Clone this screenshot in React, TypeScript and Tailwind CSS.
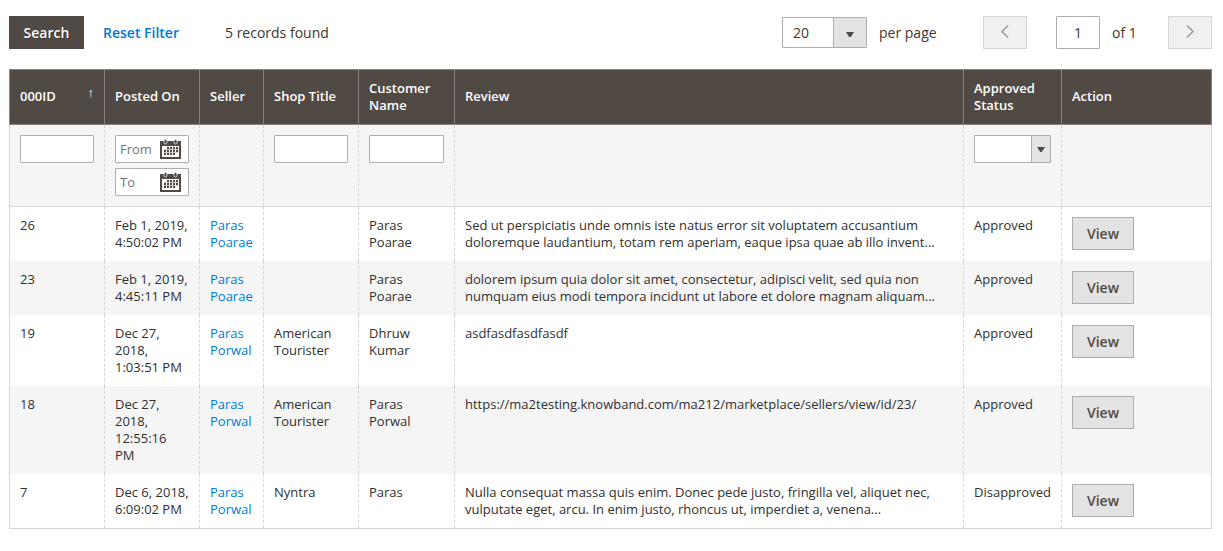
import React from 'react';

type Row = {
  id: string;
  posted: string[];
  seller: string[];
  shop: string[];
  customer: string[];
  review: string[];
  status: string;
};

const rows: Row[] = [
  {
    id: '26',
    posted: ['Feb 1, 2019,', '4:50:02 PM'],
    seller: ['Paras', 'Poarae'],
    shop: [],
    customer: ['Paras', 'Poarae'],
    review: [
      'Sed ut perspiciatis unde omnis iste natus error sit voluptatem accusantium',
      'doloremque laudantium, totam rem aperiam, eaque ipsa quae ab illo invent...',
    ],
    status: 'Approved',
  },
  {
    id: '23',
    posted: ['Feb 1, 2019,', '4:45:11 PM'],
    seller: ['Paras', 'Poarae'],
    shop: [],
    customer: ['Paras', 'Poarae'],
    review: [
      'dolorem ipsum quia dolor sit amet, consectetur, adipisci velit, sed quia non',
      'numquam eius modi tempora incidunt ut labore et dolore magnam aliquam...',
    ],
    status: 'Approved',
  },
  {
    id: '19',
    posted: ['Dec 27,', '2018,', '1:03:51 PM'],
    seller: ['Paras', 'Porwal'],
    shop: ['American', 'Tourister'],
    customer: ['Dhruw', 'Kumar'],
    review: ['asdfasdfasdfasdf'],
    status: 'Approved',
  },
  {
    id: '18',
    posted: ['Dec 27,', '2018,', '12:55:16', 'PM'],
    seller: ['Paras', 'Porwal'],
    shop: ['American', 'Tourister'],
    customer: ['Paras', 'Porwal'],
    review: ['https://ma2testing.knowband.com/ma212/marketplace/sellers/view/id/23/'],
    status: 'Approved',
  },
  {
    id: '7',
    posted: ['Dec 6, 2018,', '6:09:02 PM'],
    seller: ['Paras', 'Porwal'],
    shop: ['Nyntra'],
    customer: ['Paras'],
    review: [
      'Nulla consequat massa quis enim. Donec pede justo, fringilla vel, aliquet nec,',
      'vulputate eget, arcu. In enim justo, rhoncus ut, imperdiet a, venena...',
    ],
    status: 'Disapproved',
  },
];

const headers: string[][] = [
  ['000ID'],
  ['Posted On'],
  ['Seller'],
  ['Shop Title'],
  ['Customer', 'Name'],
  ['Review'],
  ['Approved', 'Status'],
  ['Action'],
];

const grid = 'grid grid-cols-[95px_95px_64px_95px_96px_509px_98px_151px]';
const cell =
  'border-l border-dashed border-[#d6d6d6] pl-[10px] pt-[10px] pb-[10px] first:border-solid last:border-r last:[border-right-style:solid]';
const field = 'h-7 rounded-[1px] border border-[#adadad] bg-white';

function Lines({ text }: { text: string[] }) {
  return (
    <>
      {text.map((line, i) => (
        <span key={i} className="block whitespace-nowrap">
          {line}
        </span>
      ))}
    </>
  );
}

function CalendarIcon() {
  return (
    <svg width="21" height="20" viewBox="0 0 21 20" shapeRendering="crispEdges">
      <path fill="#514943" d="M0 2h21v18H0z" />
      <path fill="#fff" d="M2 7h17v11H2z" />
      <path
        fill="#514943"
        d="M7 8h2v2H7zM10 8h2v2h-2zM13 8h2v2h-2zM16 8h2v2h-2zM4 11h2v2H4zM7 11h2v2H7zM10 11h2v2h-2zM13 11h2v2h-2zM16 11h2v2h-2zM4 14h2v2H4zM7 14h2v2H7zM10 14h2v2h-2zM13 14h2v2h-2z"
      />
      <path fill="#514943" fillOpacity="0.3" d="M4 10h14v1H4zM4 13h14v1H4z" />
      <g shapeRendering="auto">
        <rect x="4" y="0.5" width="3" height="4.5" rx="1.5" fill="#514943" stroke="#ddd" strokeWidth="0.9" />
        <rect x="14" y="0.5" width="3" height="4.5" rx="1.5" fill="#514943" stroke="#ddd" strokeWidth="0.9" />
      </g>
    </svg>
  );
}

function Caret() {
  return (
    <svg width="8" height="5" viewBox="0 0 8 5">
      <path fill="#514943" d="M0 0h8L4.8 5H3.2z" />
    </svg>
  );
}

function DateField({ label }: { label: string }) {
  return (
    <div className={`${field} flex w-[74px] items-center justify-between pr-[7px] pl-1 text-[#757575]`}>
      <span>{label}</span>
      <span className="pb-px">
        <CalendarIcon />
      </span>
    </div>
  );
}

function PageButton({ d }: { d: string }) {
  return (
    <button className="flex h-[33px] w-11 items-center justify-center border border-[#d6d6d6] bg-[#f0f0f0] pb-[2px]">
      <svg width="8" height="13" viewBox="0 0 8 13" fill="none" stroke="#999592" strokeWidth="1.4">
        <path d={d} />
      </svg>
    </button>
  );
}

export default function App() {
  return (
    <div className="h-[551px] w-[1223px] bg-white pt-4 pl-[9px] font-['Open_Sans',sans-serif] text-[13px] leading-[17px] text-[#303030]">
      <div className="flex h-[33px] w-[1203px] items-center text-sm text-[#41362f]">
        <button className="h-[33px] w-[75px] bg-[#514943] font-semibold text-white [text-shadow:1px_1px_0_rgba(0,0,0,0.25)]">
          Search
        </button>
        <a className="ml-[19px] font-semibold text-[#007bdb]">Reset Filter</a>
        <span className="ml-[46px]">5 records found</span>
        <div className="ml-auto flex items-center">
          <div className="flex h-[31px] w-[85px] rounded-[1px] border border-[#adadad]">
            <span className="flex w-[50px] items-center pl-[10px]">20</span>
            <span className="flex flex-1 items-center justify-center border-l border-[#adadad] bg-[#e3e3e3] pt-[3px]">
              <Caret />
            </span>
          </div>
          <span className="ml-3 w-[104px]">per page</span>
          <PageButton d="M7 0.5L1 6.5L7 12.5" />
          <div className="ml-[29px] flex h-[33px] w-11 items-center justify-center rounded-[1px] border border-[#adadad]">
            1
          </div>
          <span className="ml-3 w-[56px]">of 1</span>
          <PageButton d="M1 0.5L7 6.5L1 12.5" />
        </div>
      </div>

      <div className="mt-5 w-[1203px]">
        <div className={`${grid} h-14 border-y border-r border-[#8a837f] bg-[#514943] font-semibold text-white`}>
          {headers.map((h, i) => (
            <div
              key={i}
              className="flex items-center justify-between border-l border-[#8a837f] pb-px pl-[10px]"
            >
              <div>
                <Lines text={h} />
              </div>
              {i === 0 && <span className="mr-[10px] mb-2 text-[13px] font-normal">↑</span>}
            </div>
          ))}
        </div>

        <div className={`${grid} h-[82px] border-b border-[#d6d6d6] bg-[#f5f5f5]`}>
          <div className={cell}>
            <div className={`${field} w-[74px]`} />
          </div>
          <div className={`${cell} flex flex-col gap-[5px]`}>
            <DateField label="From" />
            <DateField label="To" />
          </div>
          <div className={cell} />
          <div className={cell}>
            <div className={`${field} w-[74px]`} />
          </div>
          <div className={cell}>
            <div className={`${field} w-[75px]`} />
          </div>
          <div className={cell} />
          <div className={cell}>
            <div className={`${field} flex w-[77px] justify-end`}>
              <span className="flex w-[19px] items-center justify-center border-l border-[#adadad] bg-[#e3e3e3]">
                <Caret />
              </span>
            </div>
          </div>
          <div className={cell} />
        </div>

        <div className="border-b border-[#d6d6d6]">
          {rows.map((r) => (
            <div key={r.id} className={`${grid} even:bg-[#f5f5f5]`}>
              <div className={cell}>{r.id}</div>
              <div className={cell}>
                <Lines text={r.posted} />
              </div>
              <div className={`${cell} text-[#007bdb]`}>
                <Lines text={r.seller} />
              </div>
              <div className={cell}>
                <Lines text={r.shop} />
              </div>
              <div className={cell}>
                <Lines text={r.customer} />
              </div>
              <div className={cell}>
                <Lines text={r.review} />
              </div>
              <div className={cell}>{r.status}</div>
              <div className={cell}>
                <button className="block h-[33px] w-[62px] border border-[#adadad] bg-[#e3e3e3] text-sm font-semibold text-[#514943]">
                  View
                </button>
              </div>
            </div>
          ))}
        </div>
      </div>
    </div>
  );
}
